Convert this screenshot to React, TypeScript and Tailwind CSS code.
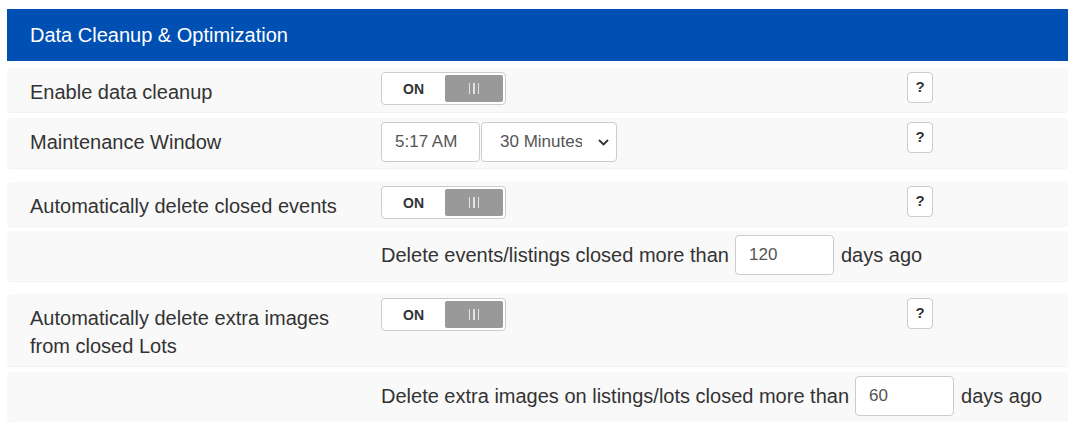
function Toggle() {
  return (
    <div className="flex h-[33px] w-[125px] items-stretch rounded-[4px] border border-[#cccccc] bg-white py-[2px] pr-[2px]">
      <div className="flex flex-1 items-center justify-center pt-[1px] text-[14px] font-bold text-[#333333]">ON</div>
      <div className="flex w-[58px] items-center justify-center gap-[3px] rounded-[2px] bg-[#999999]">
        <span className="h-[11px] w-[1.5px] bg-[#e4e4e4]" />
        <span className="h-[11px] w-[1.5px] bg-[#e4e4e4]" />
        <span className="h-[11px] w-[1.5px] bg-[#e4e4e4]" />
      </div>
    </div>
  );
}

function Help() {
  return (
    <div className="flex h-[31px] w-[26px] items-center justify-center rounded-[4px] border border-[#cccccc] bg-white text-[15px] font-bold text-[#333333]">
      ?
    </div>
  );
}

function Row({ label, children, help, mb }: { label?: string; children: React.ReactNode; help?: boolean; mb: string }) {
  return (
    <div className={`flex items-start rounded-[4px] bg-[#f9f9f9] pt-[4px] pb-[6px] pl-[23px] shadow-[0_1px_1px_rgba(0,0,0,0.06)] ${mb}`}>
      <div className="w-[351px] shrink-0 pr-[16px] pt-[6px] text-[20px] leading-[28px] text-[#333333]">{label}</div>
      <div className="w-[526px] shrink-0">{children}</div>
      <div>{help && <Help />}</div>
    </div>
  );
}

function DaysLine({ text, value }: { text: string; value: string }) {
  return (
    <div className="flex items-center gap-[6px] whitespace-nowrap text-[20px] text-[#333333]">
      <span>{text}</span>
      <div className="flex h-[40px] w-[99px] shrink-0 items-center rounded-[4px] border border-[#cccccc] bg-white pl-[13px] text-[17px] text-[#555555]">
        {value}
      </div>
      <span className="ml-[1px]">days ago</span>
    </div>
  );
}

export default function App() {
  return (
    <div className="ml-[7px] mr-[8px] pt-[9px] font-['Liberation_Sans',Arial,sans-serif]">
      <div className="mb-[7px] flex h-[52px] items-center bg-[#004fb3] pl-[23px] text-[20px] text-white">
        Data Cleanup &amp; Optimization
      </div>

      <Row label="Enable data cleanup" help mb="mb-[6px]">
        <Toggle />
      </Row>
      <Row label="Maintenance Window" help mb="mb-[14px]">
        <div className="flex gap-[1px]">
          <div className="flex h-[40px] w-[99px] items-center rounded-[4px] border border-[#cccccc] bg-white pl-[13px] text-[17px] text-[#555555]">
            5:17 AM
          </div>
          <div className="flex h-[40px] w-[136px] items-center rounded-[4px] border border-[#cccccc] bg-white pl-[18px] text-[17px] text-[#555555]">
            <span className="w-[82px] overflow-hidden whitespace-nowrap">30 Minutes</span>
            <svg className="ml-[16px]" width="11" height="7" viewBox="0 0 11 7" fill="none">
              <path d="M1 1l4.5 4.5L10 1" stroke="#333333" strokeWidth="1.8" />
            </svg>
          </div>
        </div>
      </Row>

      <Row label="Automatically delete closed events" help mb="mb-[5px]">
        <Toggle />
      </Row>
      <Row mb="mb-[13px]">
        <DaysLine text="Delete events/listings closed more than" value="120" />
      </Row>

      <Row label="Automatically delete extra images from closed Lots" help mb="mb-[6px]">
        <Toggle />
      </Row>
      <Row mb="mb-0">
        <DaysLine text="Delete extra images on listings/lots closed more than" value="60" />
      </Row>
    </div>
  );
}
